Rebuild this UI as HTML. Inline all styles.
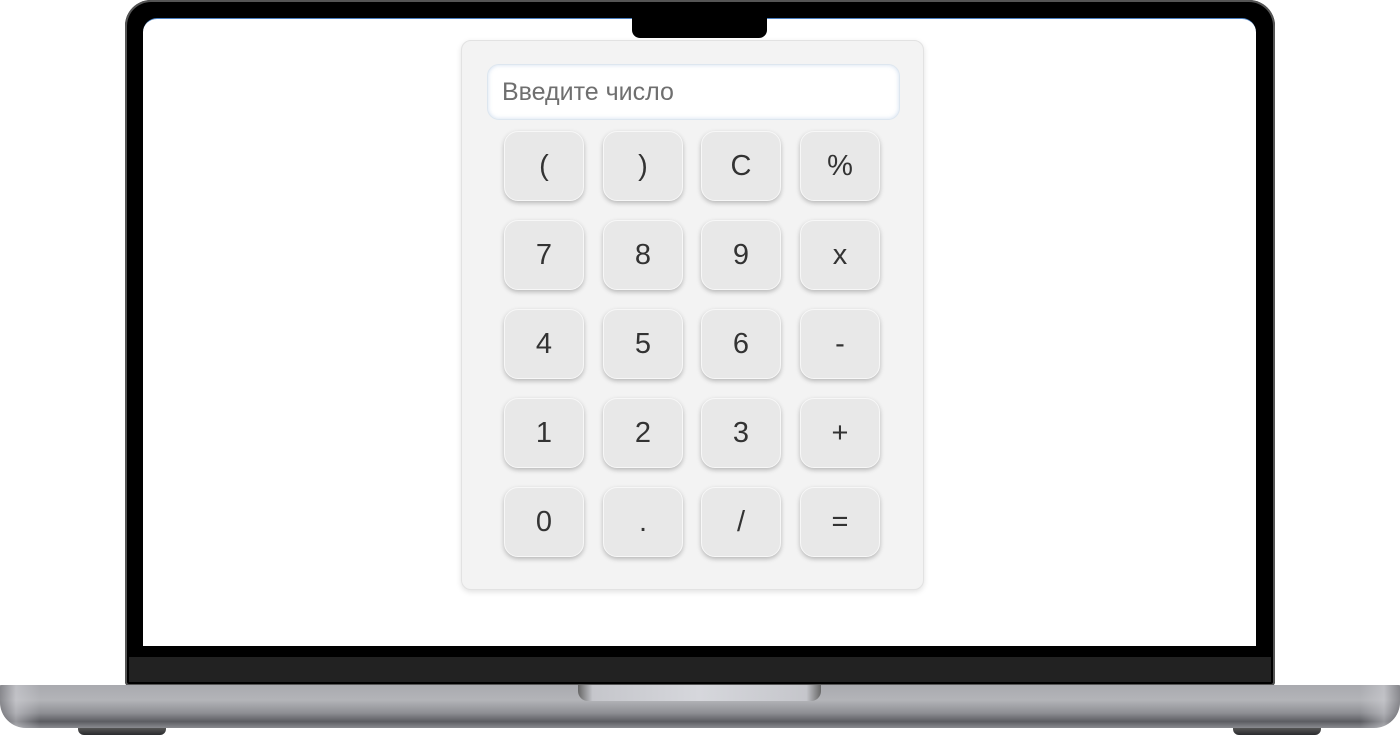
<!DOCTYPE html>
<html><head><meta charset="utf-8"><style>
*{margin:0;padding:0;box-sizing:border-box}
body{width:1400px;height:735px;background:#fff;position:relative;overflow:hidden;font-family:"Liberation Sans",sans-serif}
.lid{position:absolute;left:125px;top:0;width:1150px;height:686px;background:#000;border-radius:26px 26px 4px 4px;box-shadow:inset 0 0 0 2px #555}
.screen{position:absolute;left:143px;top:18px;width:1113px;height:628px;background:#fff;border-radius:14px 14px 0 0;border-top:1px solid #4a7fc0}
.notch{position:absolute;left:632px;top:18px;width:135px;height:20px;background:#000;border-radius:0 0 8px 8px}
.chin{position:absolute;left:129px;top:657px;width:1142px;height:25px;background:#222}
.base{position:absolute;left:0;top:685px;width:1400px;height:43px;border-radius:2px 2px 26px 26px;background:linear-gradient(#a9aaaf,#b3b4b8 35%,#8e8f94 65%,#5c5d62 85%,#8a8b90)}
.base:before{content:"";position:absolute;left:0;top:0;width:40px;height:43px;border-radius:0 0 0 26px;background:linear-gradient(90deg,rgba(110,110,115,.6),rgba(210,210,215,.5) 40%,rgba(110,110,115,0))}
.base:after{content:"";position:absolute;right:0;top:0;width:40px;height:43px;border-radius:0 0 26px 0;background:linear-gradient(270deg,rgba(110,110,115,.6),rgba(210,210,215,.5) 40%,rgba(110,110,115,0))}
.groove{position:absolute;left:578px;top:685px;width:243px;height:16px;background:linear-gradient(90deg,#666,#c5c6cb 6%,#d6d7dc 50%,#c5c6cb 94%,#666);border-radius:0 0 10px 10px}
.foot{position:absolute;top:728px;width:88px;height:7px;background:linear-gradient(#555,#2a2b2e);border-radius:0 0 6px 6px}
.panel{position:absolute;left:461px;top:40px;width:463px;height:550px;background:#f3f3f3;border:1px solid #e2e2e2;border-radius:10px;box-shadow:0 2px 6px rgba(0,0,0,.12)}
.inp{position:absolute;left:487px;top:64px;width:413px;height:56px;background:#fff;border-radius:12px;border:1px solid #dde6ef;box-shadow:inset 0 0 4px rgba(120,160,210,.35);font-size:25px;color:#6f6f6f;padding:13px 0 0 14px}
.b{position:absolute;width:80px;height:70px;background:#e8e8e8;border-radius:14px;border:1px solid #f7f7f7;box-shadow:0 2px 5px rgba(0,0,0,.25);font-size:29px;color:#333;text-align:center;line-height:68px}
</style></head><body>
<div class="lid"></div><div class="screen"></div><div class="notch"></div><div class="chin"></div>
<div class="foot" style="left:78px"></div><div class="foot" style="left:1233px"></div>
<div class="base"></div><div class="groove"></div>
<div class="panel"></div>
<div class="inp">Введите число</div>
<div class="b" style="left:504px;top:131px">(</div><div class="b" style="left:603px;top:131px">)</div><div class="b" style="left:701px;top:131px">C</div><div class="b" style="left:800px;top:131px">%</div>
<div class="b" style="left:504px;top:220px">7</div><div class="b" style="left:603px;top:220px">8</div><div class="b" style="left:701px;top:220px">9</div><div class="b" style="left:800px;top:220px">x</div>
<div class="b" style="left:504px;top:309px">4</div><div class="b" style="left:603px;top:309px">5</div><div class="b" style="left:701px;top:309px">6</div><div class="b" style="left:800px;top:309px">-</div>
<div class="b" style="left:504px;top:398px">1</div><div class="b" style="left:603px;top:398px">2</div><div class="b" style="left:701px;top:398px">3</div><div class="b" style="left:800px;top:398px">+</div>
<div class="b" style="left:504px;top:487px">0</div><div class="b" style="left:603px;top:487px">.</div><div class="b" style="left:701px;top:487px">/</div><div class="b" style="left:800px;top:487px">=</div>
</body></html>
